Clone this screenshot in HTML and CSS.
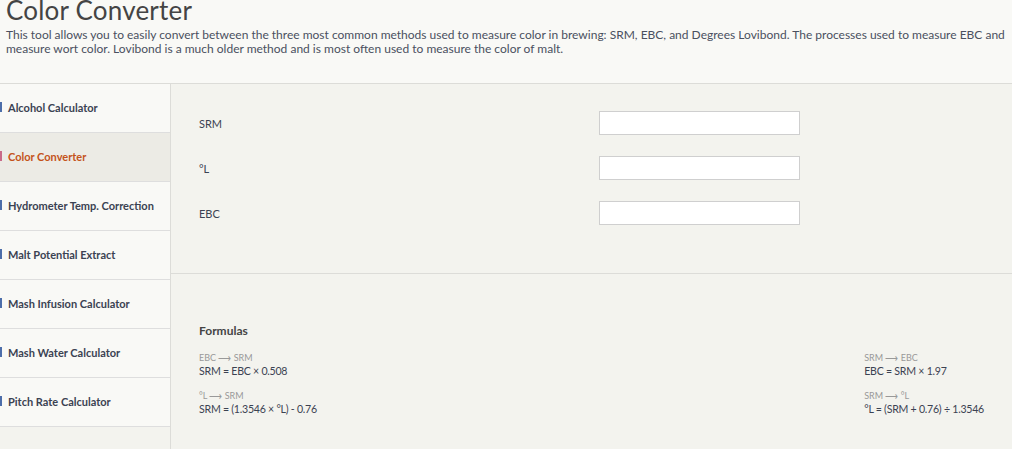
FILE: index.html
```html
<!DOCTYPE html>
<html>
<head>
<meta charset="utf-8">
<link rel="stylesheet" href="styles.css">
</head>
<body>
<header class="intro">
  <h1 class="title">Color Converter</h1>
  <p class="desc">This tool allows you to easily convert between the three most common methods used to measure color in brewing: SRM, EBC, and Degrees Lovibond. The processes used to measure EBC and measure wort color. Lovibond is a much older method and is most often used to measure the color of malt.</p>
</header>
<div class="layout">
  <nav class="sidebar">
    <a class="nav-item">Alcohol Calculator</a>
    <a class="nav-item active">Color Converter</a>
    <a class="nav-item">Hydrometer Temp. Correction</a>
    <a class="nav-item">Malt Potential Extract</a>
    <a class="nav-item">Mash Infusion Calculator</a>
    <a class="nav-item">Mash Water Calculator</a>
    <a class="nav-item">Pitch Rate Calculator</a>
  </nav>
  <main class="main">
    <section class="form">
      <label class="label">SRM</label><input class="field" type="text">
      <label class="label">°L</label><input class="field" type="text">
      <label class="label">EBC</label><input class="field" type="text">
    </section>
    <section class="formulas">
      <h2 class="formulas-title">Formulas</h2>
      <div class="formula-cols">
        <div class="formula-col">
          <div class="caption">EBC ⟶ SRM</div>
          <div class="formula">SRM = EBC × 0.508</div>
          <div class="caption">°L ⟶ SRM</div>
          <div class="formula">SRM = (1.3546 × °L) - 0.76</div>
        </div>
        <div class="formula-col">
          <div class="caption">SRM ⟶ EBC</div>
          <div class="formula">EBC = SRM × 1.97</div>
          <div class="caption">SRM ⟶ °L</div>
          <div class="formula">°L = (SRM + 0.76) ÷ 1.3546</div>
        </div>
      </div>
    </section>
  </main>
</div>
</body>
</html>
```

FILE: styles.css
```css
* { box-sizing: border-box; }
html, body { height: 100%; }
body {
  margin: 0;
  background: #f3f3ee;
  font-family: Lato, "Open Sans", Arial, sans-serif;
  color: #3b4252;
  overflow: hidden;
}
.intro {
  display: flow-root;
  background: #f9f9f6;
  padding: 0 6px;
  height: 84px;
  border-bottom: 1px solid #dcdcd8;
}
.title {
  margin: -4px 0 0;
  font-size: 26px;
  font-weight: 400;
  line-height: 29px;
  color: #444;
  letter-spacing: 0.2px;
}
.desc {
  margin: 3px 0 0;
  font-size: 12px;
  line-height: 14px;
  color: #4a5060;
}
.layout {
  display: flex;
  height: calc(100% - 84px);
}
.sidebar {
  width: 171px;
  flex: none;
  border-right: 1px solid #dcdcd8;
  display: flex;
  flex-direction: column;
}
.nav-item {
  position: relative;
  display: flex;
  align-items: center;
  height: 49px;
  padding-left: 8px;
  padding-bottom: 2px;
  background: #f9f9f6;
  border-bottom: 1px solid #dedede;
  font-size: 11px;
  font-weight: 700;
  color: #3b4252;
}
.nav-item::before {
  content: "";
  position: absolute;
  left: 0;
  top: 18px;
  width: 2px;
  height: 10px;
  background: #4d6eaa;
}
.nav-item.active {
  background: #ecebe5;
  color: #c4531b;
}
.nav-item.active::before { background: #c96a88; }
.main {
  flex: 1;
  display: flex;
  flex-direction: column;
}
.form {
  display: grid;
  grid-template-columns: 400px 201px;
  grid-auto-rows: 24px;
  row-gap: 21px;
  align-items: center;
  padding: 27px 28px 0;
  height: 190px;
  border-bottom: 1px solid #dcdcd8;
}
.label {
  font-size: 11px;
  color: #3b4252;
}
.field {
  height: 24px;
  border: 1px solid #cfcfcf;
  background: #fff;
  margin: 0;
}
.formulas {
  padding: 49px 28px 0;
}
.formulas-title {
  margin: 0 0 14px;
  font-size: 12px;
  font-weight: 700;
  color: #444;
}
.formula-cols {
  display: flex;
  justify-content: space-between;
}
.caption {
  font-size: 9px;
  line-height: 12px;
  color: #999;
}
.formula {
  font-size: 10.6px;
  line-height: 15px;
  letter-spacing: -0.25px;
  color: #3b4252;
  margin-bottom: 11px;
}
```
